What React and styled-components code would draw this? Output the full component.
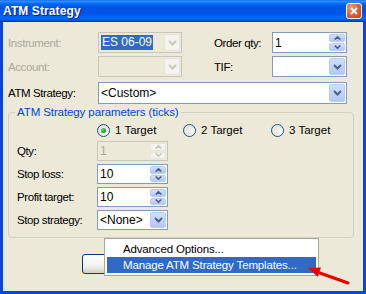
import React from 'react';
import styled, { createGlobalStyle } from 'styled-components';

const Global = createGlobalStyle`
  html, body { margin: 0; padding: 0; background: #ECE9D8; }
  body { font-family: "Liberation Sans", Arial, sans-serif; font-size: 11px; color: #000; }
  * { box-sizing: border-box; }
`;

const Window = styled.div`
  position: relative;
  width: 366px;
  height: 294px;
  display: flex;
  flex-direction: column;
  overflow: hidden;
`;

const TitleBar = styled.div`
  flex: none;
  height: 22px;
  display: flex;
  align-items: center;
  justify-content: space-between;
  padding: 0 4px 0 3px;
  background: linear-gradient(180deg, #0058EE 0%, #3A93FF 4%, #288EFF 8%, #127DFF 12%, #036FFC 16%, #0262EE 22%, #0057E5 30%, #0054E3 40%, #0055EB 60%, #005BF5 72%, #026AFE 82%, #0062EF 88%, #0052D6 93%, #0040AB 97%, #003092 100%);
  color: #fff;
  font-weight: bold;
  font-size: 12px;
  letter-spacing: 0.1px;
  text-shadow: 1px 1px #0A1E8A;
`;

const CloseButton = styled.div`
  width: 16px;
  height: 16px;
  border: 1px solid #fff;
  border-radius: 3px;
  background: radial-gradient(circle at 30% 25%, #F29A7E 0%, #E2623F 45%, #C83C1B 100%);
  display: flex;
  align-items: center;
  justify-content: center;
`;

const Body = styled.div`
  flex: 1;
  background: #ECE9D8;
  border: 3px solid #0845D9;
  border-top: none;
  padding: 10px 0 0 5px;
`;

const TopGrid = styled.div`
  display: grid;
  grid-template-columns: 90px 84px 32px 58px 75px;
  grid-template-rows: 21px 21px;
  row-gap: 3px;
  align-items: center;
`;

const StrategyRow = styled.div`
  margin-top: 5px;
  height: 22px;
  display: grid;
  grid-template-columns: 90px 249px;
  align-items: center;
`;

const Label = styled.span`
  color: ${p => (p.$disabled ? '#ACA899' : '#000')};
  white-space: nowrap;
  font-size: 11.5px;
  letter-spacing: -0.4px;
`;

const Field = styled.div`
  height: 100%;
  display: flex;
  align-items: stretch;
  border: 1px solid ${p => (p.$disabled ? '#C9C7BA' : '#7F9DB9')};
  background: ${p => (p.$disabled ? '#ECE9D8' : '#fff')};
  padding: 1px;
`;

const Value = styled.div`
  flex: 1;
  display: flex;
  align-items: center;
  padding-left: 1px;
  color: ${p => (p.$disabled ? '#ACA899' : '#000')};
  font-size: 12px;
  overflow: hidden;
  white-space: nowrap;
`;

const Selected = styled.span`
  background: #316AC5;
  color: #fff;
  line-height: 15px;
  padding: 0 1px;
`;

const DropButton = styled.div`
  width: 16px;
  flex: none;
  display: flex;
  align-items: center;
  justify-content: center;
  border: 1px solid ${p => (p.$disabled ? '#E8E6DC' : '#B9CBF3')};
  border-radius: 2px;
  background: ${p =>
    p.$disabled
      ? '#F4F3EE'
      : 'linear-gradient(180deg, #D2DEFB 0%, #C1D3FB 50%, #B2C6F5 100%)'};
`;

const SpinButtons = styled.div`
  width: 16px;
  flex: none;
  display: flex;
  flex-direction: column;
  gap: 1px;
`;

const SpinHalf = styled.div`
  flex: 1;
  display: flex;
  align-items: center;
  justify-content: center;
  border-radius: 2px;
  border: 1px solid ${p => (p.$disabled ? '#E8E6DC' : '#B9CBF3')};
  background: ${p =>
    p.$disabled
      ? '#F4F3EE'
      : 'linear-gradient(180deg, #D2DEFB 0%, #C1D3FB 50%, #B2C6F5 100%)'};
`;

const Group = styled.fieldset`
  margin: 2px 0 0 0;
  width: 346px;
  min-width: 0;
  border: 1px solid #D0D0BF;
  border-radius: 4px;
  padding: 4px 0 7px 8px;
`;

const Legend = styled.legend`
  color: #0046D5;
  padding: 0 2px;
  margin-left: -2px;
  line-height: 13px;
  font-size: 11.5px;
  letter-spacing: -0.1px;
`;

const RadioRow = styled.div`
  margin-left: 80px;
  height: 14px;
  display: grid;
  grid-template-columns: 86px 88px auto;
  align-items: center;
`;

const RadioItem = styled.div`
  display: flex;
  align-items: center;
  gap: 5px;
  font-size: 11.5px;
  white-space: nowrap;
`;

const RadioCircle = styled.div`
  width: 13px;
  height: 13px;
  border-radius: 50%;
  border: 1px solid #1C5180;
  background: linear-gradient(135deg, #DCDBD5 0%, #F2F1EC 55%, #FFFFFF 100%);
  display: flex;
  align-items: center;
  justify-content: center;
  &::after {
    content: '';
    display: ${p => (p.$checked ? 'block' : 'none')};
    width: 5px;
    height: 5px;
    border-radius: 50%;
    background: radial-gradient(circle at 35% 35%, #5EDA5E 0%, #21A121 60%, #138A13 100%);
  }
`;

const ParamGrid = styled.div`
  margin-top: 4px;
  display: grid;
  grid-template-columns: 80px 71px;
  grid-auto-rows: 20px;
  row-gap: 3px;
  align-items: center;
`;

const BottomButton = styled.div`
  margin: 16px 0 0 74px;
  width: 92px;
  height: 20px;
  border: 1px solid #003C74;
  border-radius: 3px;
  background: linear-gradient(180deg, #FFFFFF 0%, #F3F2EE 60%, #D6D0C5 100%);
`;

const Menu = styled.div`
  position: absolute;
  left: 104px;
  top: 238px;
  width: 215px;
  background: #fff;
  border: 1px solid #ACA899;
  padding: 2px;
  display: flex;
  flex-direction: column;
`;

const MenuItem = styled.div`
  height: 16px;
  display: flex;
  align-items: center;
  padding-left: 16px;
  font-size: 11.5px;
  letter-spacing: -0.15px;
  white-space: nowrap;
  background: ${p => (p.$active ? '#316AC5' : 'transparent')};
  color: ${p => (p.$active ? '#fff' : '#000')};
`;

const ArrowSvg = styled.svg`
  position: absolute;
  left: 300px;
  top: 258px;
`;

const Chevron = ({ color }) => (
  <svg width="9" height="6" viewBox="0 0 9 6">
    <path d="M1 1 L4.5 4.5 L8 1" stroke={color} strokeWidth="2" fill="none" />
  </svg>
);

const SmallChevron = ({ up, color }) => (
  <svg width="7" height="4" viewBox="0 0 7 4">
    <path
      d={up ? 'M0.7 3.5 L3.5 0.8 L6.3 3.5' : 'M0.7 0.5 L3.5 3.2 L6.3 0.5'}
      stroke={color}
      strokeWidth="1.6"
      fill="none"
    />
  </svg>
);

const Combo = ({ disabled, children }) => (
  <Field $disabled={disabled}>
    <Value $disabled={disabled}>{children}</Value>
    <DropButton $disabled={disabled}>
      <Chevron color={disabled ? '#C9C7BA' : '#4D6185'} />
    </DropButton>
  </Field>
);

const Spinner = ({ disabled, children }) => (
  <Field $disabled={disabled}>
    <Value $disabled={disabled}>{children}</Value>
    <SpinButtons>
      <SpinHalf $disabled={disabled}>
        <SmallChevron up color={disabled ? '#C9C7BA' : '#4D6185'} />
      </SpinHalf>
      <SpinHalf $disabled={disabled}>
        <SmallChevron color={disabled ? '#C9C7BA' : '#4D6185'} />
      </SpinHalf>
    </SpinButtons>
  </Field>
);

export default function App() {
  return (
    <>
      <Global />
      <Window>
        <TitleBar>
          <span>ATM Strategy</span>
          <CloseButton>
            <svg width="8" height="8" viewBox="0 0 8 8">
              <path d="M1 1 L7 7 M7 1 L1 7" stroke="#fff" strokeWidth="1.8" />
            </svg>
          </CloseButton>
        </TitleBar>
        <Body>
          <TopGrid>
            <Label $disabled>Instrument:</Label>
            <Combo disabled>
              <Selected>ES 06-09</Selected>
            </Combo>
            <span />
            <Label>Order qty:</Label>
            <Spinner>1</Spinner>

            <Label $disabled>Account:</Label>
            <Combo disabled />
            <span />
            <Label>TIF:</Label>
            <Combo />
          </TopGrid>
          <StrategyRow>
            <Label>ATM Strategy:</Label>
            <Combo>&lt;Custom&gt;</Combo>
          </StrategyRow>
          <Group>
            <Legend>ATM Strategy parameters (ticks)</Legend>
            <RadioRow>
              <RadioItem>
                <RadioCircle $checked />1 Target
              </RadioItem>
              <RadioItem>
                <RadioCircle />2 Target
              </RadioItem>
              <RadioItem>
                <RadioCircle />3 Target
              </RadioItem>
            </RadioRow>
            <ParamGrid>
              <Label>Qty:</Label>
              <Spinner disabled>1</Spinner>
              <Label>Stop loss:</Label>
              <Spinner>10</Spinner>
              <Label>Profit target:</Label>
              <Spinner>10</Spinner>
              <Label>Stop strategy:</Label>
              <Combo>&lt;None&gt;</Combo>
            </ParamGrid>
          </Group>
          <BottomButton />
        </Body>
        <Menu>
          <MenuItem>Advanced Options...</MenuItem>
          <MenuItem $active>Manage ATM Strategy Templates...</MenuItem>
        </Menu>
        <ArrowSvg width="56" height="30" viewBox="0 0 56 30">
          <line x1="17" y1="14" x2="48" y2="25" stroke="#E60000" strokeWidth="3" strokeLinecap="round" />
          <polygon points="8,10 17.6,18.8 21,9.4" fill="#E60000" />
        </ArrowSvg>
      </Window>
    </>
  );
}
